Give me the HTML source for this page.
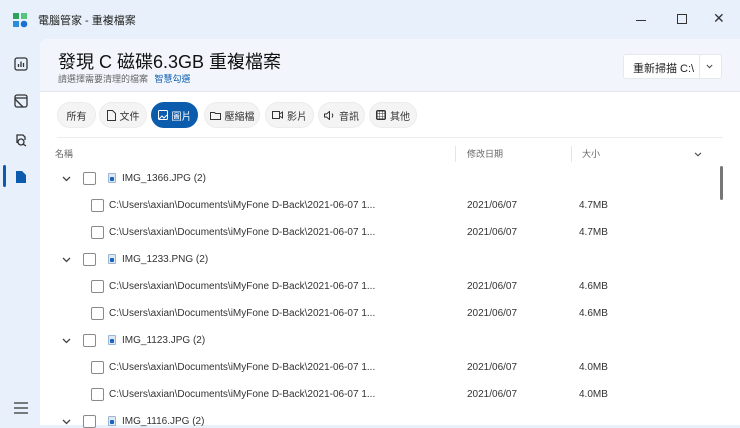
<!DOCTYPE html>
<html><head><meta charset="utf-8"><style>
*{margin:0;padding:0;box-sizing:border-box}
body{width:740px;height:425px;overflow:hidden;background:#e8f1fb;font-family:"Liberation Sans","Noto Sans CJK TC",sans-serif;color:#222;position:relative}
.abs{position:absolute}
.panel{position:absolute;left:40px;top:39px;width:700px;height:386px;background:#fff;border-top-left-radius:8px;overflow:hidden}
.hdr{position:absolute;left:0;top:0;width:700px;height:53px;background:#f2f6fc;border-bottom:1px solid #e3e7ec}
.chip{position:absolute;top:102px;height:26px;border-radius:13px;background:#f4f4f4;border:1px solid #ececec;font-size:10px;color:#333;display:flex;align-items:center;justify-content:center;gap:4px}
.chip.on{background:#0b5cad;color:#fff;border-color:#0b5cad}
.cb{position:absolute;width:13px;height:13px;border:1px solid #8a8a8a;border-radius:2px;background:#fff}
.t{position:absolute;font-size:10px;color:#333;white-space:nowrap}
.r{margin-top:1px}
.ic{position:absolute;width:8px;height:10px;background:#dfe9f5;border:1px solid #9fb6d3;border-radius:1px}
.ic::after{content:"";position:absolute;left:1px;top:3px;width:4px;height:4px;background:#1565c0;border-radius:1px}
.chev{position:absolute;width:9px;height:6px}
</style></head><body>
<svg width="0" height="0" style="position:absolute"><defs><symbol id="cv" viewBox="0 0 9 6"><path d="M1 1l3.5 3.5L8 1" fill="none" stroke="#444" stroke-width="1.3"/></symbol></defs></svg>
<!-- title bar -->
<svg class="abs" style="left:12px;top:12px" width="16" height="16" viewBox="0 0 16 16"><path d="M1 1h6v6H1z" fill="#2fa25a"/><path d="M9 1h6v6H9z" fill="#56c47a"/><path d="M1 9h6v6H1z" fill="#2b8cd9"/><circle cx="12" cy="12" r="3.3" fill="#1a6fd1"/></svg>
<div class="t" style="left:38px;top:12px;font-size:11px;color:#222">電腦管家 - 重複檔案</div>
<div class="abs" style="left:636px;top:20px;width:10px;height:1px;background:#333"></div>
<div class="abs" style="left:677px;top:14px;width:10px;height:10px;border:1px solid #333"></div>
<div class="t" style="left:713px;top:10px;font-size:14px;color:#333">✕</div>
<!-- sidebar icons -->
<svg class="abs" style="left:14px;top:57px" width="14" height="14" viewBox="0 0 14 14" fill="none" stroke="#333" stroke-width="1.3"><rect x="1" y="1" width="12" height="12" rx="2"/><path d="M4.5 10V7M7 10V4.5M9.5 10V6"/></svg>
<svg class="abs" style="left:14px;top:94px" width="14" height="14" viewBox="0 0 14 14" fill="none" stroke="#333" stroke-width="1.3"><rect x="1" y="1" width="12" height="12" rx="2"/><path d="M1 5l8 8"/><path d="M1 4h12"/></svg>
<svg class="abs" style="left:14px;top:133px" width="14" height="14" viewBox="0 0 14 14" fill="none" stroke="#333" stroke-width="1.3"><path d="M3 10V2h6l2 2v3"/><circle cx="7" cy="9" r="3"/><path d="M9.2 11.2L12 13"/></svg>
<div class="abs" style="left:3px;top:165px;width:3px;height:22px;background:#0b5cad;border-radius:2px"></div>
<svg class="abs" style="left:15px;top:170px" width="12" height="14" viewBox="0 0 12 14"><path d="M1 1h6l4 4v8H1z" fill="#0b5cad"/></svg>
<svg class="abs" style="left:14px;top:402px" width="14" height="12" viewBox="0 0 14 12" stroke="#333" stroke-width="1.2"><path d="M0 1h14M0 6h14M0 11h14"/></svg>
<div class="panel">
 <div class="hdr"></div>
 <div class="t" style="left:18px;top:9px;font-size:18px;color:#111">發現 C 磁碟6.3GB 重複檔案</div>
 <div class="t" style="left:18px;top:33px;font-size:9px;color:#666">請選擇需要清理的檔案 <span style="color:#0b5cad;margin-left:4px">智慧勾選</span></div>
 <div class="abs" style="left:583px;top:15px;width:99px;height:25px;background:#fff;border:1px solid #e5e8ec;border-radius:3px"></div>
 <div class="abs" style="left:659px;top:15px;width:1px;height:25px;background:#e5e8ec"></div>
 <div class="t" style="left:593px;top:21px;font-size:11px;color:#222">重新掃描 C:\</div>
 <svg class="chev" style="left:666px;top:25px;width:7px;height:5px"><use href="#cv"/></svg>
 <div class="abs" style="left:17px;top:98px;width:666px;height:1px;background:#ececec"></div>
 <div class="t" style="left:15px;top:108px;font-size:9px;color:#666">名稱</div>
 <div class="abs" style="left:415px;top:107px;width:1px;height:16px;background:#e5e5e5"></div>
 <div class="t" style="left:427px;top:108px;font-size:9px;color:#666">修改日期</div>
 <div class="abs" style="left:531px;top:107px;width:1px;height:16px;background:#e5e5e5"></div>
 <div class="t" style="left:542px;top:108px;font-size:9px;color:#666">大小</div>
 <svg class="chev" style="left:654px;top:113px;width:8px;height:5px"><use href="#cv"/></svg>
 <div class="abs" style="left:680px;top:127px;width:3px;height:34px;background:#777;border-radius:2px"></div>
</div>
<div class="chip" style="left:57px;width:39px">所有</div>
<div class="chip" style="left:99px;width:48px"><svg width="9" height="11" viewBox="0 0 9 11" fill="none" stroke="#333"><path d="M.5.5h5l3 3v7h-8z"/></svg>文件</div>
<div class="chip on" style="left:151px;width:47px"><svg width="10" height="10" viewBox="0 0 10 10" fill="none" stroke="#fff"><rect x=".5" y=".5" width="9" height="9" rx="1"/><path d="M1 9l3-3 2 2 3-3"/></svg>圖片</div>
<div class="chip" style="left:204px;width:56px"><svg width="11" height="9" viewBox="0 0 11 9" fill="none" stroke="#333"><path d="M.5 1.5h4l1 1h5v6h-10z"/></svg>壓縮檔</div>
<div class="chip" style="left:265px;width:49px"><svg width="11" height="8" viewBox="0 0 11 8" fill="none" stroke="#333"><rect x=".5" y=".5" width="7" height="7"/><path d="M7.5 3l3-2v6l-3-2"/></svg>影片</div>
<div class="chip" style="left:318px;width:47px"><svg width="11" height="9" viewBox="0 0 11 9" fill="none" stroke="#333"><path d="M.5 3h2l3-2.5v8l-3-2.5h-2z M8 2.5q1.5 2 0 4"/></svg>音訊</div>
<div class="chip" style="left:369px;width:48px"><svg width="10" height="10" viewBox="0 0 10 10" fill="#333"><rect width="10" height="10" rx="2"/><g fill="#fff"><rect x="1.5" y="1.5" width="2" height="2"/><rect x="4" y="1.5" width="2" height="2"/><rect x="6.5" y="1.5" width="2" height="2"/><rect x="1.5" y="4" width="2" height="2"/><rect x="4" y="4" width="2" height="2"/><rect x="6.5" y="4" width="2" height="2"/><rect x="1.5" y="6.5" width="2" height="2"/><rect x="4" y="6.5" width="2" height="2"/><rect x="6.5" y="6.5" width="2" height="2"/></g></svg>其他</div>

<!-- rows -->
<svg class="chev" style="left:62px;top:176px"><use href="#cv"/></svg><div class="cb" style="left:83px;top:172px"></div><div class="ic" style="left:108px;top:173px"></div><div class="t r" style="left:122px;top:172px">IMG_1366.JPG (2)</div>
<div class="cb" style="left:91px;top:199px"></div><div class="t r" style="left:109px;top:199px">C:\Users\axian\Documents\iMyFone D-Back\2021-06-07 1...</div><div class="t r" style="left:467px;top:199px">2021/06/07</div><div class="t r" style="left:579px;top:199px">4.7MB</div>
<div class="cb" style="left:91px;top:226px"></div><div class="t r" style="left:109px;top:226px">C:\Users\axian\Documents\iMyFone D-Back\2021-06-07 1...</div><div class="t r" style="left:467px;top:226px">2021/06/07</div><div class="t r" style="left:579px;top:226px">4.7MB</div>
<svg class="chev" style="left:62px;top:257px"><use href="#cv"/></svg><div class="cb" style="left:83px;top:253px"></div><div class="ic" style="left:108px;top:254px"></div><div class="t r" style="left:122px;top:253px">IMG_1233.PNG (2)</div>
<div class="cb" style="left:91px;top:280px"></div><div class="t r" style="left:109px;top:280px">C:\Users\axian\Documents\iMyFone D-Back\2021-06-07 1...</div><div class="t r" style="left:467px;top:280px">2021/06/07</div><div class="t r" style="left:579px;top:280px">4.6MB</div>
<div class="cb" style="left:91px;top:307px"></div><div class="t r" style="left:109px;top:307px">C:\Users\axian\Documents\iMyFone D-Back\2021-06-07 1...</div><div class="t r" style="left:467px;top:307px">2021/06/07</div><div class="t r" style="left:579px;top:307px">4.6MB</div>
<svg class="chev" style="left:62px;top:338px"><use href="#cv"/></svg><div class="cb" style="left:83px;top:334px"></div><div class="ic" style="left:108px;top:335px"></div><div class="t r" style="left:122px;top:334px">IMG_1123.JPG (2)</div>
<div class="cb" style="left:91px;top:361px"></div><div class="t r" style="left:109px;top:361px">C:\Users\axian\Documents\iMyFone D-Back\2021-06-07 1...</div><div class="t r" style="left:467px;top:361px">2021/06/07</div><div class="t r" style="left:579px;top:361px">4.0MB</div>
<div class="cb" style="left:91px;top:388px"></div><div class="t r" style="left:109px;top:388px">C:\Users\axian\Documents\iMyFone D-Back\2021-06-07 1...</div><div class="t r" style="left:467px;top:388px">2021/06/07</div><div class="t r" style="left:579px;top:388px">4.0MB</div>
<svg class="chev" style="left:62px;top:419px"><use href="#cv"/></svg><div class="cb" style="left:83px;top:415px"></div><div class="ic" style="left:108px;top:416px"></div><div class="t r" style="left:122px;top:415px">IMG_1116.JPG (2)</div>
</body></html>
